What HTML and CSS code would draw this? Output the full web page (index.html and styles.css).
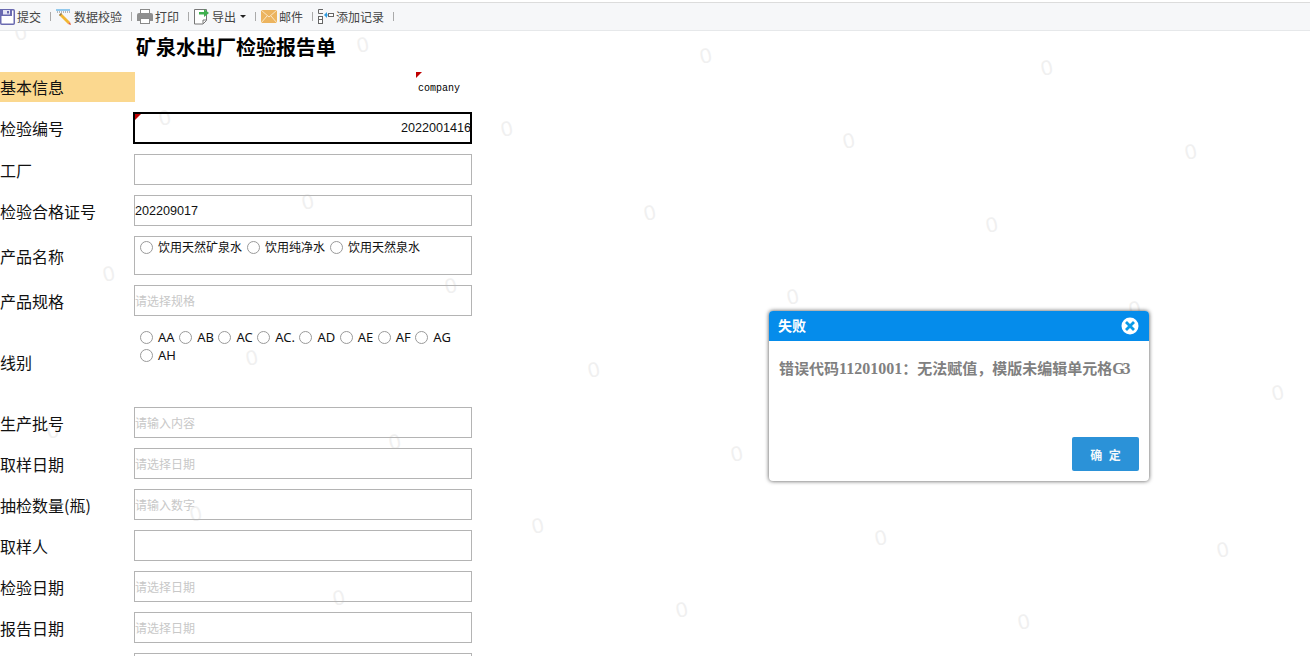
FILE: index.html
```html
<!DOCTYPE html>
<html lang="zh-CN">
<head>
<meta charset="utf-8">
<title>矿泉水出厂检验报告单</title>
<link rel="stylesheet" href="styles.css">
</head>
<body>
<div class="watermarks" aria-hidden="true">
<span class="wm" style="left:16px;top:23px">0</span><span class="wm" style="left:358px;top:35px">0</span><span class="wm" style="left:701px;top:46px">0</span><span class="wm" style="left:1042px;top:58px">0</span>
<span class="wm" style="left:160px;top:108px">0</span><span class="wm" style="left:502px;top:119px">0</span><span class="wm" style="left:844px;top:131px">0</span><span class="wm" style="left:1186px;top:142px">0</span>
<span class="wm" style="left:303px;top:192px">0</span><span class="wm" style="left:645px;top:203px">0</span><span class="wm" style="left:987px;top:215px">0</span>
<span class="wm" style="left:104px;top:264px">0</span><span class="wm" style="left:446px;top:276px">0</span><span class="wm" style="left:788px;top:287px">0</span><span class="wm" style="left:1130px;top:299px">0</span>
<span class="wm" style="left:247px;top:348px">0</span><span class="wm" style="left:589px;top:360px">0</span><span class="wm" style="left:1273px;top:383px">0</span>
<span class="wm" style="left:48px;top:421px">0</span><span class="wm" style="left:390px;top:432px">0</span><span class="wm" style="left:732px;top:444px">0</span>
<span class="wm" style="left:191px;top:504px">0</span><span class="wm" style="left:533px;top:516px">0</span><span class="wm" style="left:876px;top:528px">0</span><span class="wm" style="left:1218px;top:540px">0</span>
<span class="wm" style="left:334px;top:588px">0</span><span class="wm" style="left:677px;top:600px">0</span><span class="wm" style="left:1019px;top:612px">0</span>
</div>

<div class="toolbar">
  <div class="tool">
    <svg class="ico" width="15" height="16" viewBox="0 0 15 16"><rect x="0.750" y="0.750" width="13.500" height="14.500" rx="1" fill="#fff" stroke="#6a6ab0" stroke-width="1.500"/><rect x="0" y="0" width="12" height="7" fill="#6a6ab0"/><rect x="3" y="1" width="7" height="4.500" fill="#e6e6f3"/><rect x="7" y="2" width="2" height="2.500" fill="#6a6ab0"/></svg>
    <span>提交</span>
  </div>
  <i class="sep"></i>
  <div class="tool">
    <svg class="ico" width="16" height="16" viewBox="0 0 16 16"><path d="M0 1h14" stroke="#2f9be0"/><path d="M1 3h1M3 3h1M5 3h1M7 3h1M9 3h1M11 3h1M13 3h1" stroke="#777"/><path d="M3 6l2-2 9 9-2 2z" fill="#f2b632"/><path d="M12 15l2-2 1 3z" fill="#e8603c"/><path d="M3 6l2-2 1 1-2 2z" fill="#8a7a60"/></svg>
    <span>数据校验</span>
  </div>
  <i class="sep"></i>
  <div class="tool">
    <svg class="ico" width="16" height="15" viewBox="0 0 16 15"><rect x="3.500" y="0.500" width="9" height="5" fill="#fff" stroke="#8a8a8a"/><path d="M0 6q0-2 2-2h12q2 0 2 2v6H0z" fill="#8f8f8f"/><rect x="3.500" y="9.500" width="9" height="5" fill="#fff" stroke="#8a8a8a"/></svg>
    <span>打印</span>
  </div>
  <i class="sep"></i>
  <div class="tool">
    <svg class="ico" width="16" height="17" viewBox="0 0 16 17"><path d="M0.500 1.500h12v11l-3.500 3.500h-8.500z" fill="#fff" stroke="#777"/><path d="M9 15.500v-3.500h3.500" fill="none" stroke="#777"/><path d="M5 4h5V1l5 4-5 4V6.500H5z" fill="#3fb04f"/></svg>
    <span>导出</span>
    <i class="caret"></i>
  </div>
  <i class="sep"></i>
  <div class="tool">
    <svg class="ico" width="16" height="13" viewBox="0 0 16 13"><rect width="16" height="13" fill="#ecb45f"/><path d="M0 0l8 7 8-7M0 13l6-7M16 13l-6-7" fill="none" stroke="#fbe6c4"/></svg>
    <span>邮件</span>
  </div>
  <i class="sep"></i>
  <div class="tool">
    <svg class="ico" width="16" height="15" viewBox="0 0 16 15"><path d="M5 0.500H0.500v4H5" fill="none" stroke="#666"/><rect x="0.500" y="7.500" width="4" height="3" fill="#fff" stroke="#666"/><rect x="0.500" y="10.500" width="4" height="4" fill="#fff" stroke="#666"/><rect x="10.500" y="4.500" width="5" height="3" fill="#fff" stroke="#666"/><path d="M10 6H7" stroke="#2f9be0"/><path d="M6 6l3-3v6z" fill="#2f9be0"/></svg>
    <span>添加记录</span>
  </div>
  <i class="sep"></i>
</div>

<main class="form">
  <h1 class="title">矿泉水出厂检验报告单</h1>

  <div class="section">基本信息</div>
  <div class="company"><i class="mark"></i>company</div>

  <div class="label">检验编号</div>
  <div class="box selected"><i class="mark"></i><span class="num">2022001416</span></div>

  <div class="label">工厂</div>
  <div class="box"></div>

  <div class="label">检验合格证号</div>
  <div class="box value">202209017</div>

  <div class="label">产品名称</div>
  <div class="box tall options">
    <label class="opt"><input type="radio" name="p"><span>饮用天然矿泉水</span></label>
    <label class="opt"><input type="radio" name="p"><span>饮用纯净水</span></label>
    <label class="opt"><input type="radio" name="p"><span>饮用天然泉水</span></label>
  </div>

  <div class="label">产品规格</div>
  <div class="box hint">请选择规格</div>

  <div class="label">线别</div>
  <div class="lines options">
    <label class="opt"><input type="radio" name="l"><span>AA</span></label>
    <label class="opt"><input type="radio" name="l"><span>AB</span></label>
    <label class="opt"><input type="radio" name="l"><span>AC</span></label>
    <label class="opt"><input type="radio" name="l"><span>AC.</span></label>
    <label class="opt"><input type="radio" name="l"><span>AD</span></label>
    <label class="opt"><input type="radio" name="l"><span>AE</span></label>
    <label class="opt"><input type="radio" name="l"><span>AF</span></label>
    <label class="opt"><input type="radio" name="l"><span>AG</span></label>
    <label class="opt"><input type="radio" name="l"><span>AH</span></label>
  </div>

  <div class="label">生产批号</div>
  <div class="box hint">请输入内容</div>

  <div class="label">取样日期</div>
  <div class="box hint">请选择日期</div>

  <div class="label">抽检数量(瓶)</div>
  <div class="box hint">请输入数字</div>

  <div class="label">取样人</div>
  <div class="box"></div>

  <div class="label">检验日期</div>
  <div class="box hint">请选择日期</div>

  <div class="label">报告日期</div>
  <div class="box hint">请选择日期</div>

  <div class="label"></div>
  <div class="box"></div>
</main>

<section class="dialog">
  <header class="dialog-head">
    <span>失败</span>
    <svg width="18" height="18" viewBox="0 0 18 18"><circle cx="9" cy="9" r="8.500" fill="#fff"/><path d="M5 5l8 8M13 5l-8 8" stroke="#0a9be8" stroke-width="2.800"/></svg>
  </header>
  <p class="dialog-msg">错误代码<span class="latin">11201001</span>：无法赋值，模版未编辑单元格<span class="latin tight">G3</span></p>
  <footer class="dialog-foot"><button class="ok" type="button">确 定</button></footer>
</section>
</body>
</html>
```
FILE: styles.css
```css
* { box-sizing: border-box; }
html, body { height: 656px; overflow: hidden; }
body {
  margin: 0;
  background: #fff;
  color: #000;
  font-family: "Noto Sans CJK SC", "Noto Sans", sans-serif;
  position: relative;
}

.watermarks { position: absolute; inset: 0; pointer-events: none; }
.wm {
  position: absolute;
  width: 10px;
  height: 20px;
  margin-left: -1px;
  line-height: 20px;
  text-align: center;
  font-family: "Liberation Sans", sans-serif;
  font-size: 21px;
  color: #f0f0f0;
  transform: rotate(-12deg);
}

.toolbar {
  position: relative;
  display: flex;
  align-items: center;
  height: 29px;
  margin-top: 2px;
  background: #f6f7f9;
  border-top: 1px solid #dcdcdc;
  border-bottom: 1px solid #e6e8ea;
  font-size: 12px;
  color: #444;
}
.tool { display: flex; align-items: center; gap: 2px; height: 100%; }
.ico { flex: none; }
.sep { width: 1px; height: 9px; margin: 0 5px 0 9px; background: #aaa; }
.caret {
  width: 0; height: 0; margin-left: 2px;
  border: 3px solid transparent;
  border-top: 3px solid #222;
  border-bottom: 0;
}

.form {
  position: relative;
  display: grid;
  grid-template-columns: 134px 338px;
  row-gap: 10px;
  font-size: 16px;
}
.title {
  grid-column: 1 / 3;
  height: 31px;
  margin: 0;
  padding-left: 136px;
  font-size: 20px;
  line-height: 31px;
  font-weight: 700;
}
.section {
  height: 30px;
  width: 135px;
  display: flex;
  align-items: center;
  background: #fbd88f;
  color: #111;
}
.company {
  position: relative;
  margin-left: 282px;
  width: 56px;
  height: 30px;
  padding: 11px 0 0 2px;
  font: 10px/12px "Liberation Mono", monospace;
}
.company .mark { left: 0; top: 0; }
.label { display: flex; align-items: center; color: #111; }
.box {
  position: relative;
  display: flex;
  align-items: center;
  height: 31px;
  border: 1px solid #b4b4b4;
  font-family: "Liberation Sans", "Noto Sans CJK SC", sans-serif;
  font-size: 12.6px;
  color: #111;
}
.selected {
  height: 32px;
  margin-left: -1px;
  justify-content: flex-end;
  border: 2px solid #000;
}
.num { margin-right: -1px; }
.mark {
  position: absolute;
  left: 0;
  top: 0;
  width: 0;
  height: 0;
  border-top: 6px solid #c00000;
  border-right: 6px solid transparent;
}
.hint {
  font-family: "Noto Sans CJK SC", sans-serif;
  font-size: 12px;
  color: #c8c8c8;
}
.options {
  display: flex;
  flex-wrap: wrap;
  align-items: flex-start;
  align-content: flex-start;
  padding: 1px 0 0 5px;
  font-family: "Noto Sans CJK SC", "Noto Sans", sans-serif;
  font-size: 12px;
  color: #111;
  line-height: 18px;
}
.box.tall { height: 39px; }
.lines {
  height: 71px;
  padding: 2px 0 0 6px;
  font-family: "Noto Sans", sans-serif;
  font-size: 13px;
}
.opt { display: flex; align-items: center; height: 18px; margin-right: 5px; }
.lines .opt { margin-right: 4.5px; }
.opt input {
  appearance: none;
  width: 13px;
  height: 13px;
  margin: 0 5px 0 0;
  border: 1px solid #9a9a9a;
  border-radius: 50%;
  background: #fff;
}

.dialog {
  position: absolute;
  left: 769px;
  top: 311px;
  width: 380px;
  height: 170px;
  display: flex;
  flex-direction: column;
  background: #fff;
  border-radius: 4px;
  box-shadow: 0 0 4px rgba(0, 0, 0, .7);
  overflow: hidden;
}
.dialog-head {
  display: flex;
  align-items: center;
  justify-content: space-between;
  height: 30px;
  flex: none;
  padding: 0 10px 0 9px;
  background: #058ceb;
  color: #fff;
  font-size: 14px;
  font-weight: 700;
}
.dialog-head span { margin-top: -2px; }
.dialog-msg {
  flex: 1;
  margin: 0;
  padding: 18px 10px 0;
  font-family: "Noto Sans CJK SC", serif;
  font-size: 15px;
  line-height: 18px;
  font-weight: 700;
  color: #808080;
}
.latin { font-family: "Liberation Serif", serif; font-size: 16px; }
.tight { letter-spacing: -2px; }
.dialog-foot { display: flex; justify-content: flex-end; padding: 0 10px 10px 0; }
.ok {
  width: 67px;
  height: 34px;
  border: 0;
  border-radius: 2px;
  background: #2b92d8;
  color: #f4f8fb;
  font-family: "Noto Sans CJK SC", sans-serif;
  font-size: 12px;
  font-weight: 700;
  word-spacing: 4px;
}
```
